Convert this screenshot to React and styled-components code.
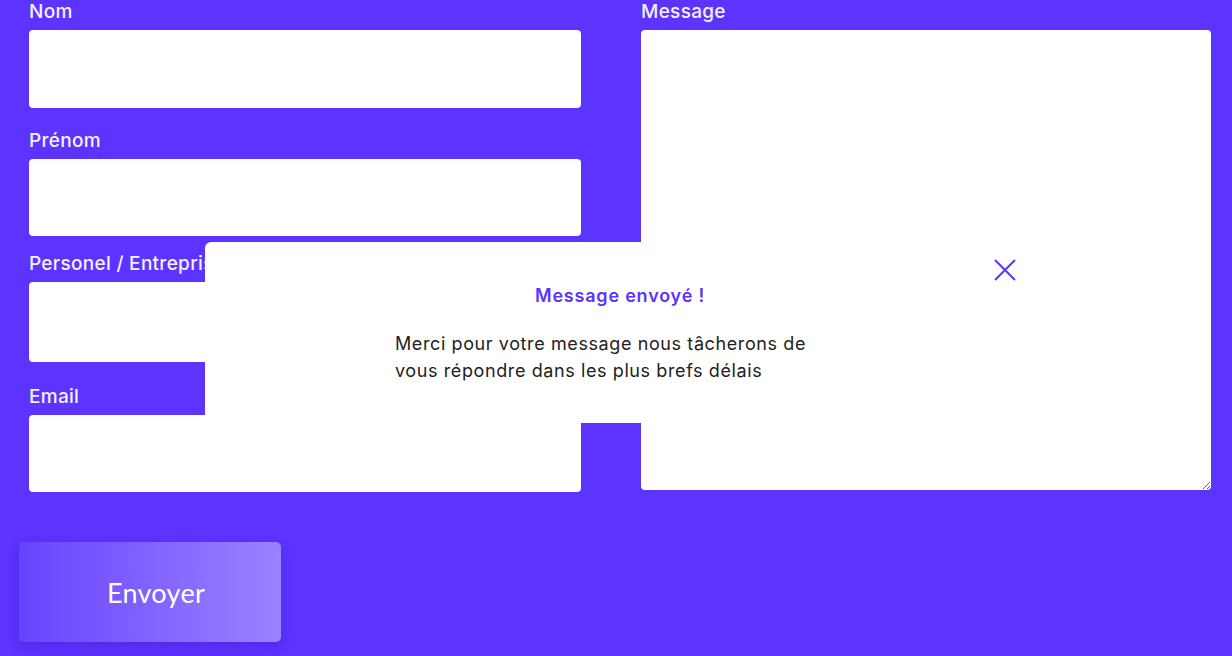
import React from 'react'
import styled, { createGlobalStyle } from 'styled-components'

const GlobalStyle = createGlobalStyle`
  html, body {
    margin: 0;
    padding: 0;
    background: #5d33ff;
    height: 100%;
    overflow: hidden;
  }
  * {
    box-sizing: border-box;
  }
`

const Page = styled.div`
  position: relative;
  height: 656px;
  padding: 0 21px 0 19px;
  font-family: Inter, "Noto Sans", sans-serif;
`

const Form = styled.form`
  display: flex;
  flex-direction: column;
`

const Columns = styled.div`
  display: grid;
  grid-template-columns: 552px 570px;
  column-gap: 60px;
  padding-left: 10px;
`

const Column = styled.div`
  display: flex;
  flex-direction: column;
`

const Field = styled.div`
  display: flex;
  flex-direction: column;
  margin-top: ${p => p.$mt || 0}px;
`

const Label = styled.label`
  color: #f4f1ff;
  font-size: 19px;
  font-weight: 500;
  line-height: 24px;
  height: 24px;
  margin-bottom: 6px;
  letter-spacing: 0.3px;
  white-space: nowrap;
`

const Input = styled.input`
  height: ${p => p.$h}px;
  border: none;
  border-radius: 4px;
  background: #fff;
  outline: none;
  padding: 0 14px;
  font-size: 16px;
`

const TextArea = styled.textarea`
  height: 460px;
  border: none;
  border-radius: 4px;
  background: #fff;
  outline: none;
  padding: 14px;
  font-size: 16px;
  resize: vertical;
`

const SendButton = styled.button`
  width: 262px;
  height: 100px;
  margin-top: 50px;
  padding: 0 0 0 12px;
  border: none;
  border-radius: 5px;
  background: linear-gradient(90deg, #6843ff 0%, #8466ff 55%, #9a82ff 100%);
  box-shadow: 0 4px 12px rgba(40, 10, 160, 0.25);
  color: #fff;
  font-family: Lato, "Noto Sans", sans-serif;
  font-size: 27px;
  font-weight: 400;
  letter-spacing: 0.3px;
  cursor: pointer;
`

const Modal = styled.div`
  position: absolute;
  left: 205px;
  top: 242px;
  width: 830px;
  height: 181px;
  background: #fff;
  border-radius: 6px;
  padding-top: 40px;
  display: flex;
  flex-direction: column;
  align-items: center;
`

const CloseButton = styled.button`
  position: absolute;
  top: 16px;
  right: 18px;
  width: 24px;
  height: 24px;
  padding: 0;
  border: none;
  background: none;
  display: flex;
  align-items: center;
  justify-content: center;
  cursor: pointer;
`

const Title = styled.h3`
  margin: 0;
  color: #5d33ff;
  font-size: 18px;
  font-weight: 600;
  line-height: 28px;
  letter-spacing: 0.8px;
`

const Body = styled.p`
  margin: 20px 0 0;
  width: 450px;
  color: #222;
  font-size: 18px;
  font-weight: 400;
  line-height: 27px;
  letter-spacing: 0.6px;
  text-align: left;
`

const fields = [
  { label: 'Nom', h: 78, mt: 0 },
  { label: 'Prénom', h: 77, mt: 21 },
  { label: 'Personel / Entreprise', h: 80, mt: 16 },
  { label: 'Email', h: 77, mt: 23 },
]

export default function App() {
  return (
    <>
      <GlobalStyle />
      <Page>
        <Form onSubmit={e => e.preventDefault()}>
          <Columns>
            <Column>
              {fields.map(f => (
                <Field key={f.label} $mt={f.mt}>
                  <Label>{f.label}</Label>
                  <Input $h={f.h} type="text" />
                </Field>
              ))}
            </Column>
            <Column>
              <Field>
                <Label>Message</Label>
                <TextArea />
              </Field>
            </Column>
          </Columns>
          <SendButton type="submit">Envoyer</SendButton>
        </Form>
        <Modal>
          <CloseButton aria-label="Fermer">
            <svg width="22" height="22" viewBox="0 0 22 22">
              <path d="M1 1L21 21M21 1L1 21" stroke="#5d33ff" strokeWidth="2" fill="none" />
            </svg>
          </CloseButton>
          <Title>Message envoyé !</Title>
          <Body>Merci pour votre message nous tâcherons de vous répondre dans les plus brefs délais</Body>
        </Modal>
      </Page>
    </>
  )
}
